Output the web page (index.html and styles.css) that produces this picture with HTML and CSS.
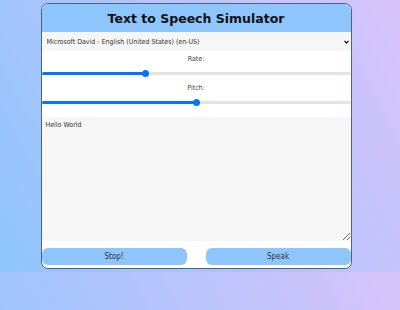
FILE: index.html
```html
<!DOCTYPE html>
<html lang="en">
<head>
  <meta charset="UTF-8" />
  <title>Text to Speech Simulator</title>
  <link rel="stylesheet" href="styles.css">
</head>
<body>

  <div class="tarjeta">
    <div class="encabezado">
      <h1>Text to Speech Simulator</h1>
    </div>

    <select id="voces" class="voces">
      <option>Microsoft David - English (United States) (en-US)</option>
    </select>

    <label for="rate" class="etiqueta">Rate:</label>
    <input type="range" id="rate" class="rango" min="0.5" max="2" step="0.1" value="1" style="--fill: 34%" />

    <label for="pitch" class="etiqueta etiqueta-pitch">Pitch:</label>
    <input type="range" id="pitch" class="rango rango-pitch" min="0" max="2" step="0.1" value="1" style="--fill: 50%" />

    <textarea id="texto" class="texto">Hello World</textarea>

    <div class="botones">
      <button class="boton" onclick="parar()">Stop!</button>
      <button class="boton" onclick="hablar()">Speak</button>
    </div>
  </div>

  <script>
    function hablar() {
      const texto = document.getElementById('texto').value;
      const msg = new SpeechSynthesisUtterance(texto);
      msg.rate = document.getElementById('rate').value;
      msg.pitch = document.getElementById('pitch').value;
      window.speechSynthesis && speechSynthesis.speak(msg);
    }

    function parar() {
      window.speechSynthesis && speechSynthesis.cancel();
    }

    document.querySelectorAll('.rango').forEach((r) => {
      r.addEventListener('input', () => {
        const p = (r.value - r.min) / (r.max - r.min) * 100;
        r.style.setProperty('--fill', p + '%');
      });
    });
  </script>
</body>
</html>
```

FILE: styles.css
```css
body {
  margin: 0;
  padding: 3px 8px 3px 0;
  font-family: 'DejaVu Sans Condensed', 'DejaVu Sans', sans-serif;
  background: linear-gradient(62deg, #8EC5FC 0%, #d8c3fc 100%);
  color: #333;
}

.tarjeta {
  width: 309px;
  margin: 0 auto;
  background-color: #ffffff;
  border: 1px solid #4a6479;
  border-radius: 7px;
  overflow: hidden;
  padding-bottom: 3px;
  display: flex;
  flex-direction: column;
}

.encabezado {
  background-color: #8EC5FC;
  height: 28px;
  display: flex;
  align-items: center;
  justify-content: center;
}

.encabezado h1 {
  margin: 0;
  font-family: 'DejaVu Sans', sans-serif;
  font-size: 12.5px;
  font-weight: 700;
  color: #111;
}

.voces {
  -webkit-appearance: none;
  appearance: none;
  height: 19px;
  margin: 0;
  border: none;
  border-radius: 0;
  background-color: #f6f6f6;
  background-image: url("data:image/svg+xml,%3Csvg xmlns='http://www.w3.org/2000/svg' width='5' height='4' viewBox='0 0 5 4'%3E%3Cpath d='M0.5 0.8 L2.5 3 L4.5 0.8' fill='none' stroke='%23111' stroke-width='1.2'/%3E%3C/svg%3E");
  background-repeat: no-repeat;
  background-position: right 2px center;
  font-family: inherit;
  font-size: 7px;
  color: #333;
  padding: 0 5px;
}

.etiqueta {
  display: block;
  text-align: center;
  font-size: 7px;
  line-height: 14px;
  margin-top: 1px;
  color: #444;
}

.etiqueta-pitch {
  margin-top: 0;
}

.rango {
  -webkit-appearance: none;
  appearance: none;
  display: block;
  width: 100%;
  height: 8px;
  margin: 3px 0 4px;
  background: transparent;
}

.rango-pitch {
  margin: 3px 0 0;
}

.rango::-webkit-slider-runnable-track {
  height: 3px;
  border-radius: 2px;
  background: linear-gradient(to right, #0075ff var(--fill), #e4e4e4 var(--fill));
}

.rango::-webkit-slider-thumb {
  -webkit-appearance: none;
  width: 7px;
  height: 7px;
  margin-top: -2px;
  border-radius: 50%;
  background: #0075ff;
}

.texto {
  display: block;
  height: 124px;
  margin: 11px 0 0;
  border: none;
  background-color: #f6f6f6;
  font-family: inherit;
  font-size: 7px;
  color: #333;
  padding: 4px 4px;
  box-sizing: border-box;
}

.botones {
  display: flex;
  justify-content: space-between;
  margin-top: 7px;
}

.boton {
  width: 145px;
  height: 17px;
  background-color: #8EC5FC;
  border: none;
  border-radius: 6px;
  font-family: inherit;
  font-size: 8px;
  color: #333;
  cursor: pointer;
}
```
